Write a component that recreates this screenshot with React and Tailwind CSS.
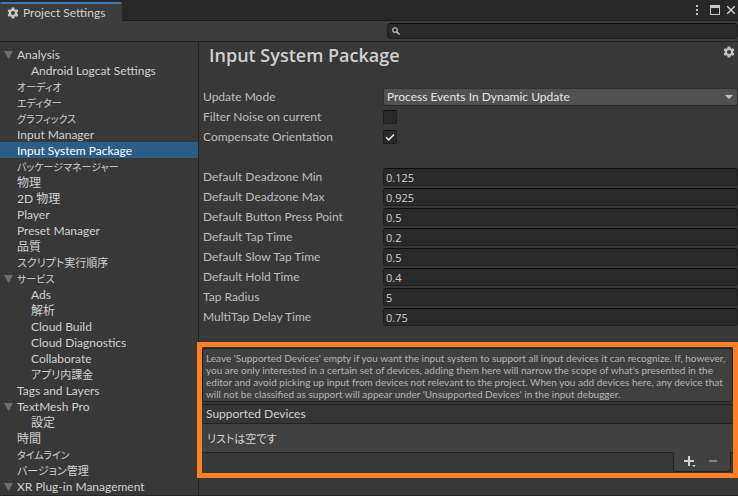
import React, { useState } from "react";

const tree = [
  { label: "Analysis", open: true },
  { label: "Android Logcat Settings", child: true },
  { label: "オーディオ", size: "text-[10px]" },
  { label: "エディター", size: "text-[10px]" },
  { label: "グラフィックス", size: "text-[10px]" },
  { label: "Input Manager" },
  { label: "Input System Package" },
  { label: "パッケージマネージャー", size: "text-[10px]" },
  { label: "物理" },
  { label: "2D 物理" },
  { label: "Player" },
  { label: "Preset Manager" },
  { label: "品質" },
  { label: "スクリプト実行順序", size: "text-[11px]" },
  { label: "サービス", open: true, size: "text-[10px]" },
  { label: "Ads", child: true },
  { label: "解析", child: true },
  { label: "Cloud Build", child: true },
  { label: "Cloud Diagnostics", child: true },
  { label: "Collaborate", child: true },
  { label: "アプリ内課金", child: true, size: "text-[11px]" },
  { label: "Tags and Layers" },
  { label: "TextMesh Pro", open: true },
  { label: "設定", child: true },
  { label: "時間" },
  { label: "タイムライン", size: "text-[10px]" },
  { label: "バージョン管理", size: "text-[11px]" },
  { label: "XR Plug-in Management", open: true },
];

const numbers = [
  ["Default Deadzone Min", "0.125"],
  ["Default Deadzone Max", "0.925"],
  ["Default Button Press Point", "0.5"],
  ["Default Tap Time", "0.2"],
  ["Default Slow Tap Time", "0.5"],
  ["Default Hold Time", "0.4"],
  ["Tap Radius", "5"],
  ["MultiTap Delay Time", "0.75"],
];

function Gear({ className }) {
  return (
    <svg viewBox="0 0 24 24" className={className} fill="currentColor" aria-hidden="true">
      <path
        fillRule="evenodd"
        d="M9.500 1h5l.7 3.300 1.900 1.100 3.200-1.100 2.500 4.300-2.500 2.300v2.200l2.500 2.300-2.500 4.300-3.200-1.100-1.900 1.100-.7 3.300h-5l-.7-3.300-1.900-1.100-3.200 1.100-2.500-4.300 2.500-2.300v-2.200L1.200 8.600l2.500-4.300 3.200 1.100 1.900-1.100zM12 8a4 4 0 1 0 0 8 4 4 0 0 0 0-8z"
      />
    </svg>
  );
}

function Tree() {
  const [selected, setSelected] = useState("Input System Package");
  return (
    <nav className="w-[199px] shrink-0 overflow-hidden border-r border-[#232323] pt-1">
      <ul>
        {tree.map((item) => (
          <li key={item.label}>
            <button
              type="button"
              onClick={() => setSelected(item.label)}
              className={
                "flex h-4 w-full items-center pt-[2px] text-left leading-4 whitespace-nowrap " +
                (selected === item.label ? "bg-[#2c5d87] text-white " : "") +
                (item.size ? item.size + " " : "") +
                (item.child ? "pl-[31px]" : item.open ? "pl-1" : "pl-[17px]")
              }
            >
              {item.open && (
                <svg viewBox="0 0 9 8" className="mr-1 h-2 w-[9px] shrink-0" fill="#6f6f6f" aria-hidden="true">
                  <path d="M0 0h9L4.500 8z" />
                </svg>
              )}
              {item.label}
            </button>
          </li>
        ))}
      </ul>
    </nav>
  );
}

function Row({ id, label, children }) {
  return (
    <div className="flex h-[18px] items-center">
      <label htmlFor={id} className="w-[180px] shrink-0 text-[#bdbdbd]">
        {label}
      </label>
      {children}
    </div>
  );
}

function Check({ id, defaultChecked }) {
  return (
    <span className="grid size-[14px]">
      <input
        id={id}
        type="checkbox"
        defaultChecked={defaultChecked}
        className="peer col-start-1 row-start-1 size-[14px] appearance-none rounded-[2px] border border-[#1f1f1f] border-t-[#0f0f0f] bg-[#2a2a2a]"
      />
      <svg
        viewBox="0 0 14 14"
        className="pointer-events-none invisible col-start-1 row-start-1 size-[14px] peer-checked:visible"
        fill="none"
        stroke="#e6e6e6"
        strokeWidth="1.5"
        aria-hidden="true"
      >
        <path d="M3 7.200l2.700 2.700L11 4.500" />
      </svg>
    </span>
  );
}

function Devices() {
  return (
    <section className="relative mt-4 -ml-[2px] border-[5px] border-[#ff7f27] pt-px">
      <p className="h-[54px] rounded-[3px] border border-[#232323] bg-[#404040] px-[3px] pt-[3px] text-[10px] leading-3 whitespace-nowrap text-[#b4b4b4]">
        Leave 'Supported Devices' empty if you want the input system to support all input devices it can recognize. If, however,
        <br />
        you are only interested in a certain set of devices, adding them here will narrow the scope of what's presented in the
        <br />
        editor and avoid picking up input from devices not relevant to the project. When you add devices here, any device that
        <br />
        will not be classified as support will appear under 'Unsupported Devices' in the input debugger.
      </p>
      <h2 className="mt-[2px] h-5 border-y border-[#232323] bg-[#353535] pl-1 leading-[18px]">Supported Devices</h2>
      <p className="h-[28px] bg-[#414141] pl-[5px] text-[11px] leading-[30px]">リストは空です</p>
      <div className="flex h-[21px]">
        <div className="flex-1 border-t border-[#232323]" />
        <div className="flex h-5 w-[58px] items-center rounded-b-[3px] border-x border-b border-[#232323] bg-[#414141] pl-[9px]">
          <button type="button" aria-label="Add" className="mr-3">
            <svg viewBox="0 0 14 12" className="h-3 w-[14px]" fill="#d2d2d2">
              <path d="M5 0h2v4h4v2H7v4H5V6H1V4h4zM9 9h4l-2 2z" />
            </svg>
          </button>
          <button type="button" aria-label="Remove">
            <svg viewBox="0 0 8 12" className="h-3 w-2" fill="#858585">
              <path d="M0 4h8v2H0z" />
            </svg>
          </button>
        </div>
        <div className="w-[2px] border-t border-[#232323]" />
      </div>
    </section>
  );
}

export default function App() {
  return (
    <div className="flex h-screen flex-col overflow-hidden border-b border-[#282828] bg-[#383838] font-['Lato','Noto_Sans_CJK_JP',sans-serif] text-[12px] leading-4 text-[#d0d0d0] [font-feature-settings:'palt']">
      <header className="flex h-[21px] shrink-0 bg-[#282828]">
        <div className="mt-[2px] flex w-[122px] items-center gap-1 rounded-t-[2px] border-t-2 border-[#3a79bb] bg-[#3c3c3c] pl-[7px]">
          <Gear className="size-3 text-[#c8c8c8]" />
          <h1>Project Settings</h1>
        </div>
        <div className="flex flex-1 items-center justify-end border-b border-[#1c1c1c] pr-[3px] text-[#c8c8c8]">
          <button type="button" aria-label="Menu" className="mr-3">
            <svg viewBox="0 0 2 10" className="h-[10px] w-[2px]" fill="currentColor">
              <path d="M0 0h2v2H0zM0 4h2v2H0zM0 8h2v2H0z" />
            </svg>
          </button>
          <button type="button" aria-label="Maximize" className="mr-[7px]">
            <svg viewBox="0 0 10 10" className="size-[10px]" fill="currentColor">
              <path fillRule="evenodd" d="M0 0h10v10H0zM1 3v6h8V3z" />
            </svg>
          </button>
          <button type="button" aria-label="Close">
            <svg viewBox="0 0 8 8" className="size-2" stroke="currentColor" strokeWidth="1.5">
              <path d="M0 0l8 8M8 0L0 8" />
            </svg>
          </button>
        </div>
      </header>

      <div className="flex h-[21px] shrink-0 justify-end border-b border-[#232323] bg-[#3c3c3c] pt-[2px]">
        <label className="ml-[387px] flex h-4 flex-1 items-center rounded-[4px] border border-[#1f1f1f] border-t-[#0f0f0f] bg-[#2a2a2a] pl-1">
          <svg viewBox="0 0 8 8" className="size-2 shrink-0" fill="none" stroke="#c4c4c4" aria-hidden="true">
            <circle cx="3" cy="3" r="2.300" strokeWidth="1.100" />
            <path d="M4.700 4.700l2.900 2.900" strokeWidth="1.500" />
          </svg>
          <input type="text" aria-label="Search" className="min-w-0 flex-1 bg-transparent px-1 outline-none" />
        </label>
      </div>

      <div className="flex min-h-0 flex-1">
        <Tree />
        <main className="min-w-0 flex-1">
          <div className="flex h-[46px] items-start justify-between pr-[3px] pl-[10px]">
            <h2 className="font-['Open_Sans',sans-serif] text-[18px] leading-[26px] font-semibold">Input System Package</h2>
            <button type="button" aria-label="Settings" className="mt-1">
              <Gear className="size-3 text-[#c4c4c4]" />
            </button>
          </div>
          <form className="flex flex-col gap-[2px] pl-1">
            <Row id="mode" label="Update Mode">
              <span className="grid min-w-0 flex-1 items-center">
                <select
                  id="mode"
                  className="col-start-1 row-start-1 h-[18px] w-full appearance-none rounded-[3px] border border-[#303030] border-b-[#242424] bg-[#515151] pl-[3px] leading-4 text-[#e4e4e4]"
                >
                  <option>Process Events In Dynamic Update</option>
                  <option>Process Events In Fixed Update</option>
                  <option>Process Events Manually</option>
                </select>
                <svg
                  viewBox="0 0 8 4"
                  className="pointer-events-none col-start-1 row-start-1 mr-[5px] h-1 w-2 justify-self-end"
                  fill="#c4c4c4"
                  aria-hidden="true"
                >
                  <path d="M0 0h8L4 4z" />
                </svg>
              </span>
            </Row>
            <Row id="noise" label="Filter Noise on current">
              <Check id="noise" />
            </Row>
            <Row id="orientation" label="Compensate Orientation">
              <Check id="orientation" defaultChecked />
            </Row>
            <div className="h-[18px]" />
            {numbers.map(([label, value]) => (
              <Row key={label} id={label} label={label}>
                <input
                  id={label}
                  type="text"
                  defaultValue={value}
                  className="h-[18px] min-w-0 flex-1 rounded-[3px] border border-[#202020] border-t-[#0d0d0d] bg-[#2a2a2a] pt-px pl-[2px] font-['Open_Sans',sans-serif] text-[11px] outline-none"
                />
              </Row>
            ))}
          </form>
          <Devices />
        </main>
      </div>
    </div>
  );
}
